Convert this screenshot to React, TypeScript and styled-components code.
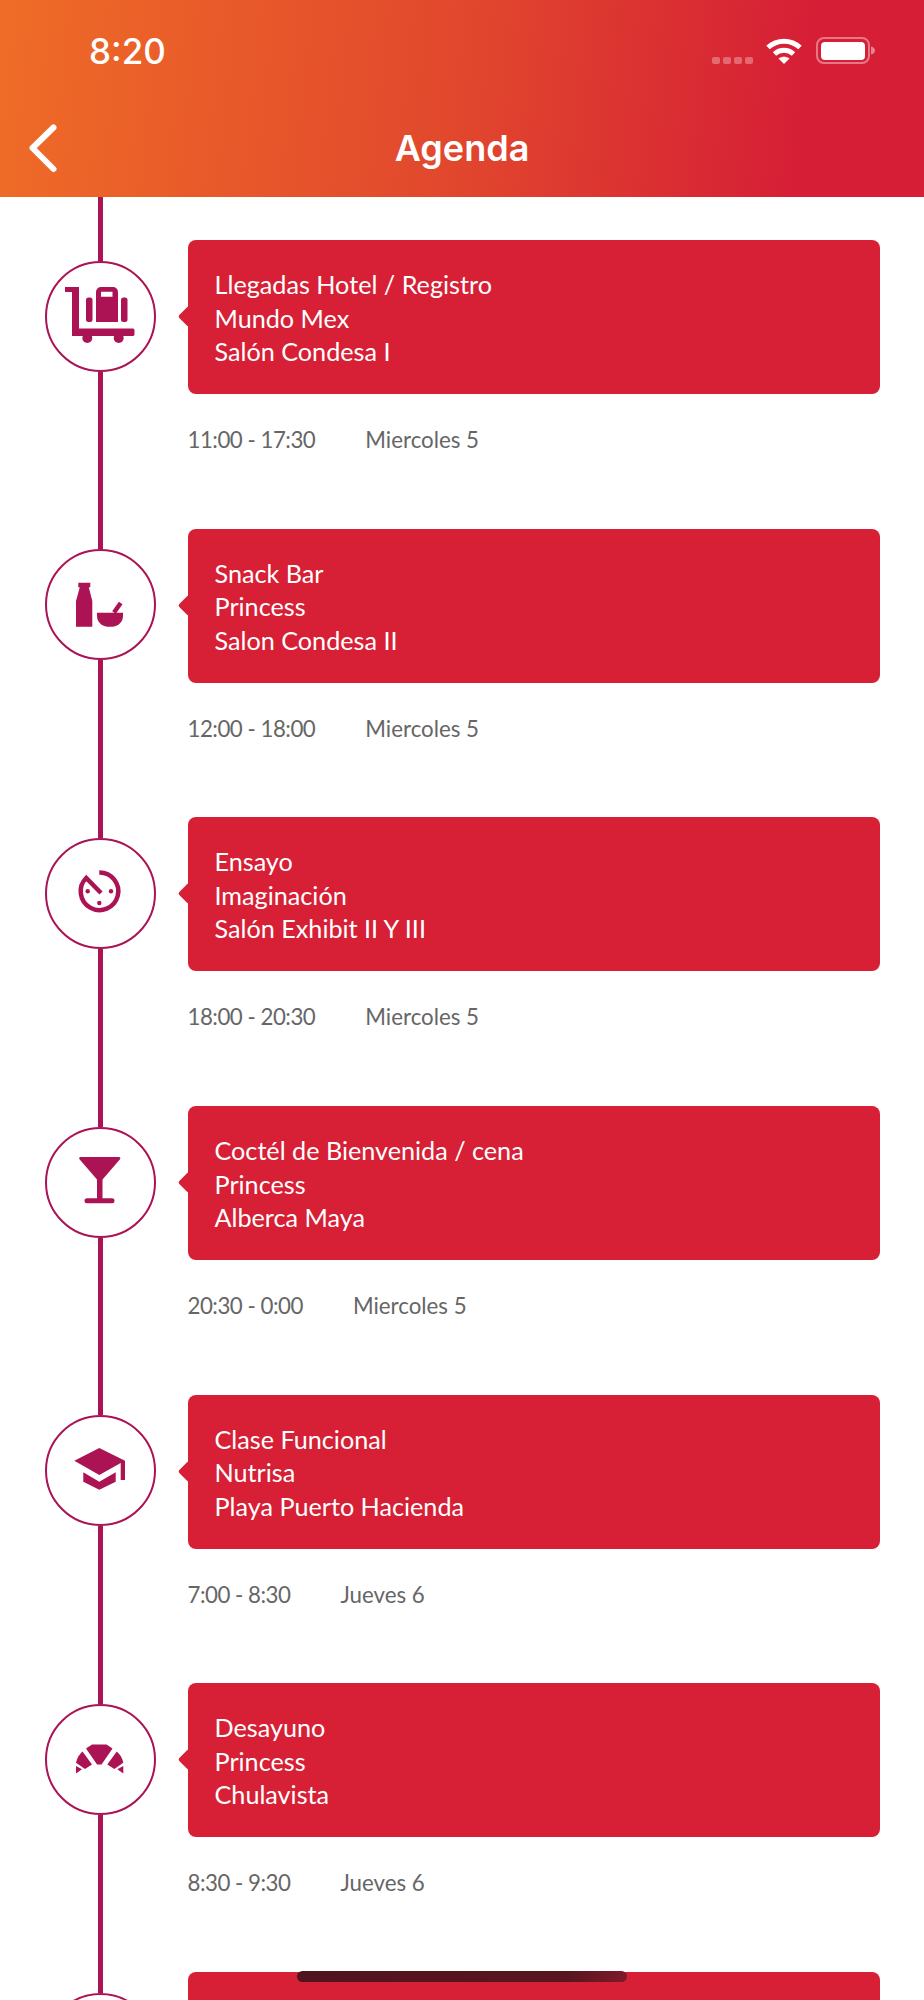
import React from "react";
import styled, { createGlobalStyle } from "styled-components";

const GlobalStyle = createGlobalStyle`
  html, body {
    margin: 0;
    padding: 0;
    background: #fff;
    font-family: Lato, "Noto Sans", sans-serif;
  }
`;

const ACCENT = "#ab1355";

const Page = styled.div`
  position: relative;
  width: 924px;
  height: 2000px;
  overflow: hidden;
  background: #fff;
`;

const Header = styled.header`
  height: 196.5px;
  box-sizing: border-box;
  background: linear-gradient(96deg, #ef6c27 0%, #e1472d 50%, #d61f36 86%);
  color: #fff;
  font-family: Inter, "Liberation Sans", sans-serif;
`;

const StatusBar = styled.div`
  height: 100px;
  box-sizing: border-box;
  padding: 30px 48px 0 89px;
  display: flex;
  align-items: flex-start;
  justify-content: space-between;
`;

const Clock = styled.div`
  font-size: 35px;
  line-height: 42px;
  font-weight: 500;
`;

const StatusIcons = styled.div`
  display: flex;
  align-items: center;
  padding-top: 7px;
`;

const Signal = styled.div`
  display: flex;
  gap: 3px;
  margin: 19px 12px 0 0;
`;

const SignalDot = styled.span`
  width: 8px;
  height: 7px;
  border-radius: 2px;
  background: rgba(255, 255, 255, 0.3);
`;

const NavBar = styled.div`
  position: relative;
  height: 96.5px;
  display: flex;
  align-items: flex-start;
  justify-content: center;
`;

const BackIcon = styled.svg`
  position: absolute;
  left: 26px;
  top: 22px;
`;

const Title = styled.h1`
  margin: 26px 0 0;
  font-size: 36px;
  line-height: 44px;
  font-weight: 600;
`;

const Row = styled.div`
  display: flex;
  height: 288.7px;
`;

const Rail = styled.div`
  width: 111px;
  margin: 0 31.5px 0 45px;
  flex: none;
  display: flex;
  flex-direction: column;
  align-items: center;
`;

const RailLine = styled.div<{ $height?: number }>`
  width: 4.5px;
  background: ${ACCENT};
  ${(p) => (p.$height ? `height: ${p.$height}px;` : "flex: 1;")}
`;

const Bubble = styled.div`
  width: 111px;
  height: 111px;
  flex: none;
  box-sizing: border-box;
  border: 2.5px solid ${ACCENT};
  border-radius: 50%;
  position: relative;
`;

const BubbleIcon = styled.svg`
  position: absolute;
  left: -2.5px;
  top: -2.5px;
  display: block;
`;

const Content = styled.div`
  width: 692.5px;
  padding-top: 43.5px;
`;

const Card = styled.div`
  position: relative;
  height: 154px;
  box-sizing: border-box;
  padding: 28px 27px 0;
  background: #d71f36;
  border-radius: 8px;
  color: #fff;
  font-size: 25.2px;
  line-height: 33.5px;

  &::before {
    content: "";
    position: absolute;
    left: -7px;
    top: 69px;
    width: 15px;
    height: 15px;
    background: #d71f36;
    border-radius: 2px;
    transform: rotate(45deg);
  }
`;

const CardLine = styled.div`
  white-space: nowrap;
`;

const Meta = styled.div`
  display: flex;
  gap: 50px;
  margin-top: 30px;
  color: #666;
  font-size: 22.3px;
  line-height: 32px;
`;

const MetaTime = styled.span`
  letter-spacing: -0.5px;
`;

const HomeIndicator = styled.div`
  position: absolute;
  left: 297px;
  top: 1971px;
  width: 330px;
  height: 11px;
  border-radius: 6px;
  background: linear-gradient(90deg, #50141e 0%, #58151f 82%, #7e1a2b 100%);
`;

const LuggageIcon = () => (
  <>
    <path d="M20 27h14v41.500h54a1.700 1.700 0 0 1 1.500 1.700v4.100a1.700 1.700 0 0 1-1.500 1.700H27V32h-7z" />
    <circle cx="42.300" cy="78" r="5" />
    <circle cx="73.700" cy="78" r="5" />
    <path fillRule="evenodd" d="M56 27h12a5 5 0 0 1 5 5v30H51V32a5 5 0 0 1 5-5zm0 4.700v5h11.500v-5z" />
    <rect x="41" y="37.500" width="6.500" height="24.500" rx="2.500" />
    <rect x="76" y="37.500" width="6.500" height="24.500" rx="2.500" />
  </>
);

const SnackIcon = () => (
  <>
    <path d="M33.300 33.700h12v4.500h-1.500L47.300 52v25.700H31V52l3.800-13.800h-1.500z" />
    <path d="M52 63.700h26v3.300c0 6-5 10.700-11 10.700h-4c-6 0-11-4.700-11-10.700z" />
    <path d="M69 63.500l6.700-9.500" stroke={ACCENT} strokeWidth="4.500" fill="none" />
  </>
);

const TimerIcon = () => (
  <>
    <path
      d="M54.300 35.500A18.800 18.800 0 1 1 41.200 41L56 56"
      stroke={ACCENT}
      strokeWidth="4.500"
      fill="none"
    />
    <circle cx="42.700" cy="54.300" r="2.200" />
    <circle cx="66" cy="54.300" r="2.200" />
    <circle cx="54.300" cy="66" r="2.200" />
  </>
);

const CocktailIcon = () => (
  <>
    <path d="M35.500 31h38.500a1.300 1.300 0 0 1 1 2.200L57.500 53.500V72.300H67a2.500 2.500 0 0 1 0 5H42a2.500 2.500 0 0 1 0-5H52V53.500L34.500 33.200a1.300 1.300 0 0 1 1-2.200z" />
  </>
);

const GradCapIcon = () => (
  <>
    <path d="M54.300 33L80 45.700V65h-4.300V48L54.300 60 29.300 45.700z" />
    <path d="M38.300 57.300L54.300 66.700 70.700 57.300V66.700L54.300 74.700 38.300 66.700z" />
  </>
);

const CroissantIcon = () => (
  <>
    <path d="M47 41.500h14.500l6 4-11 16h-4.500l-11-16z" />
    <path d="M37.500 48.500l9.500 13-7 4.500-9-6.200c1-4.500 3-8.300 6.500-11.300z" />
    <path d="M71.800 48.500l-9.500 13 7 4.500 9-6.200c-1-4.500-3-8.300-6.500-11.300z" />
    <path d="M31 63l6 3.200-6 4.300z" />
    <path d="M78.300 63l-6 3.200 6 4.300z" />
  </>
);

const events = [
  { icon: <LuggageIcon />, lines: ["Llegadas Hotel / Registro", "Mundo Mex", "Salón Condesa I"], time: "11:00 - 17:30", day: "Miercoles 5" },
  { icon: <SnackIcon />, lines: ["Snack Bar", "Princess", "Salon Condesa II"], time: "12:00 - 18:00", day: "Miercoles 5" },
  { icon: <TimerIcon />, lines: ["Ensayo", "Imaginación", "Salón Exhibit II Y III"], time: "18:00 - 20:30", day: "Miercoles 5" },
  { icon: <CocktailIcon />, lines: ["Coctél de Bienvenida / cena", "Princess", "Alberca Maya"], time: "20:30 - 0:00", day: "Miercoles 5" },
  { icon: <GradCapIcon />, lines: ["Clase Funcional", "Nutrisa", "Playa Puerto Hacienda"], time: "7:00 - 8:30", day: "Jueves 6" },
  { icon: <CroissantIcon />, lines: ["Desayuno", "Princess", "Chulavista"], time: "8:30 - 9:30", day: "Jueves 6" },
  { icon: null, lines: [], time: "", day: "" },
];

export default function App() {
  return (
    <Page>
      <GlobalStyle />
      <Header>
        <StatusBar>
          <Clock>8:20</Clock>
          <StatusIcons>
            <Signal>
              <SignalDot />
              <SignalDot />
              <SignalDot />
              <SignalDot />
            </Signal>
            <svg width="38" height="27" viewBox="0 0 38 27" style={{ display: "block" }}>
              <path d="M3 10.500C12 2 26 2 35 10.500" stroke="#fff" strokeWidth="5" fill="none" />
              <path d="M9.500 17C15 12 23 12 28.500 17" stroke="#fff" strokeWidth="5" fill="none" />
              <path d="M13.500 21.500C17 19 21 19 24.500 21.500L19 27z" fill="#fff" />
            </svg>
            <svg width="60" height="27" viewBox="0 0 60 27" style={{ display: "block", marginLeft: "13px" }}>
              <rect x="1" y="1" width="52" height="25" rx="7" fill="none" stroke="#fff" strokeOpacity="0.4" strokeWidth="2" />
              <rect x="5" y="5" width="44" height="18" rx="4" fill="#fff" />
              <path d="M55 9.500c2.500.5 4 2 4 4s-1.500 3.500-4 4z" fill="#fff" fillOpacity="0.45" />
            </svg>
          </StatusIcons>
        </StatusBar>
        <NavBar>
          <BackIcon width="34" height="52" viewBox="0 0 34 52">
            <path d="M27.500 5.500L6.500 26l21 21" stroke="#fff" strokeWidth="6" strokeLinecap="round" strokeLinejoin="round" fill="none" />
          </BackIcon>
          <Title>Agenda</Title>
        </NavBar>
      </Header>
      {events.map((event, i) => (
        <Row key={i}>
          <Rail>
            <RailLine $height={64} />
            <Bubble>
              <BubbleIcon width="111" height="111" viewBox="0 0 111 111" fill={ACCENT}>
                {event.icon}
              </BubbleIcon>
            </Bubble>
            <RailLine />
          </Rail>
          <Content>
            <Card>
              {event.lines.map((line) => (
                <CardLine key={line}>{line}</CardLine>
              ))}
            </Card>
            {event.time && (
              <Meta>
                <MetaTime>{event.time}</MetaTime>
                <span>{event.day}</span>
              </Meta>
            )}
          </Content>
        </Row>
      ))}
      <HomeIndicator />
    </Page>
  );
}
